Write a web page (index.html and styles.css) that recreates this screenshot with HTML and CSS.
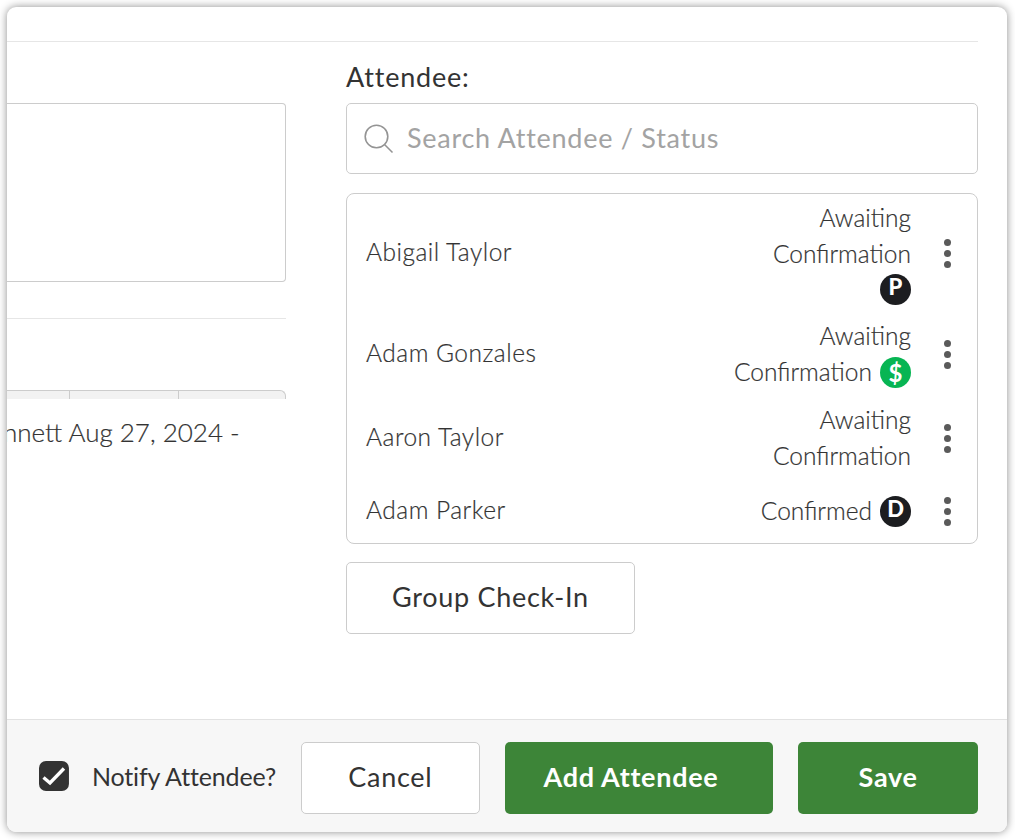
FILE: index.html
```html
<!DOCTYPE html>
<html lang="en">
<head>
    <meta charset="UTF-8">
    <meta name="viewport" content="width=device-width, initial-scale=1.0">
    <title>Attendee</title>
    <link rel="stylesheet" href="styles.css">
</head>
<body>
    <div class="modal">
        <div class="modal-body">
            <div class="left-col">
                <div class="notes-box"></div>
                <div class="divider"></div>
                <div class="table-head">
                    <span class="th th-first"></span>
                    <span class="th th-mid"></span>
                    <span class="th th-last"></span>
                </div>
                <p class="log-entry">nnett Aug 27, 2024 -</p>
            </div>

            <div class="right-col">
                <label class="field-label" for="search">Attendee:</label>
                <div class="search-box">
                    <svg class="search-icon" width="30" height="30" viewBox="0 0 30 30" fill="none" stroke="#949494" stroke-width="1.6">
                        <circle cx="12.5" cy="12.5" r="11.3"/>
                        <path d="M20.5 20.5L28.5 28.5"/>
                    </svg>
                    <input type="text" id="search" class="search-input" placeholder="Search Attendee / Status">
                </div>

                <div class="attendee-list">
                    <div class="attendee-row">
                        <span class="name">Abigail Taylor</span>
                        <span class="status">
                            <span class="line">Awaiting</span>
                            <span class="line">Confirmation</span>
                            <span class="line badge-line"><span class="badge">P</span></span>
                        </span>
                        <span class="dots"><i></i><i></i><i></i></span>
                    </div>
                    <div class="attendee-row">
                        <span class="name">Adam Gonzales</span>
                        <span class="status">
                            <span class="line">Awaiting</span>
                            <span class="line">Confirmation <span class="badge paid">$</span></span>
                        </span>
                        <span class="dots"><i></i><i></i><i></i></span>
                    </div>
                    <div class="attendee-row">
                        <span class="name">Aaron Taylor</span>
                        <span class="status">
                            <span class="line">Awaiting</span>
                            <span class="line">Confirmation</span>
                        </span>
                        <span class="dots"><i></i><i></i><i></i></span>
                    </div>
                    <div class="attendee-row last">
                        <span class="name">Adam Parker</span>
                        <span class="status">
                            <span class="line">Confirmed <span class="badge">D</span></span>
                        </span>
                        <span class="dots"><i></i><i></i><i></i></span>
                    </div>
                </div>

                <button class="btn btn-group">Group Check-In</button>
            </div>
        </div>

        <div class="modal-footer">
            <svg class="checkbox" width="30" height="30" viewBox="0 0 30 30">
                <rect width="30" height="30" rx="7" fill="#333"/>
                <path d="M4.5 16.5L11 22L25 7.5" fill="none" stroke="#fff" stroke-width="3.4"/>
            </svg>
            <span class="notify">Notify Attendee?</span>
            <button class="btn btn-cancel">Cancel</button>
            <button class="btn btn-green btn-add">Add Attendee</button>
            <button class="btn btn-green btn-save">Save</button>
        </div>
    </div>
</body>
</html>
```

FILE: styles.css
```css
* {
    box-sizing: border-box;
}

body {
    margin: 0;
    padding: 7px;
    height: 840px;
    overflow: hidden;
    background: #fff;
    font-family: Lato, "Open Sans", sans-serif;
    color: #333;
}

.modal {
    width: 1000px;
    height: 825px;
    display: flex;
    flex-direction: column;
    background: #fff;
    border-radius: 9px;
    box-shadow: 0 0 8px rgba(0, 0, 0, 0.45);
    overflow: hidden;
}

.modal-body {
    flex: 1;
    display: flex;
    gap: 60px;
    margin: 34px 29px 0 0;
    border-top: 1px solid #e6e6e6;
}

.left-col {
    width: 279px;
    padding-top: 61px;
    overflow: hidden;
}

.notes-box {
    height: 179px;
    border: 1px solid #ccc;
    border-left: none;
    border-radius: 0 4px 4px 0;
}

.divider {
    margin-top: 36px;
    border-top: 1px solid #e6e6e6;
}

.table-head {
    display: flex;
    height: 9px;
    margin-top: 71px;
    background: #f2f2f2;
    border: 1px solid #ccc;
    border-width: 1px 1px 0 0;
    border-radius: 0 6px 0 0;
}

.th {
    border-right: 1px solid #ccc;
}

.th-first {
    width: 63px;
}

.th-mid {
    width: 109px;
}

.th-last {
    border: none;
}

.log-entry {
    margin: 15px 0 0 -4px;
    font-size: 26px;
    line-height: 36px;
    font-weight: 300;
    white-space: nowrap;
    -webkit-text-stroke: 0.2px #333;
}

.right-col {
    flex: 1;
    display: flex;
    flex-direction: column;
    padding-top: 17px;
}

.field-label {
    font-size: 27px;
    line-height: 36px;
    letter-spacing: 0.8px;
}

.search-box {
    display: flex;
    align-items: center;
    gap: 13px;
    height: 71px;
    margin-top: 8px;
    padding: 0 17px;
    border: 1px solid #ccc;
    border-radius: 5px;
}

.search-input {
    flex: 1;
    padding: 0 0 3px;
    border: none;
    outline: none;
    font: 400 27px Lato, "Open Sans", sans-serif;
    letter-spacing: 0.73px;
}

.search-input::placeholder {
    color: #a3a3a3;
}

.attendee-list {
    height: 351px;
    margin-top: 19px;
    border: 1px solid #ccc;
    border-radius: 8px;
}

.attendee-row {
    display: flex;
    align-items: center;
    padding: 6px 26px 6px 19px;
    font-size: 24.5px;
    font-weight: 300;
    -webkit-text-stroke: 0.2px #333;
}

.name {
    flex: 1;
    padding-bottom: 4px;
    letter-spacing: 0.5px;
}

.status {
    display: flex;
    flex-direction: column;
    align-items: flex-end;
}

.line {
    display: flex;
    align-items: center;
    gap: 8px;
    height: 36px;
    line-height: 34px;
}

.badge-line {
    height: 34px;
}

.badge {
    width: 31px;
    height: 31px;
    border-radius: 50%;
    background: #1c1d20;
    color: #fff;
    font-size: 22px;
    line-height: 26px;
    font-weight: 900;
    text-align: center;
    -webkit-text-stroke: 0;
}

.paid {
    background: #07b553;
    font-weight: 700;
    font-size: 24px;
    line-height: 31px;
}

.dots {
    display: flex;
    flex-direction: column;
    gap: 4px;
    margin: 1px 0 0 33px;
}

.dots i {
    width: 7px;
    height: 7px;
    border-radius: 50%;
    background: #5a5a5a;
}

.last {
    padding-top: 13px;
}

.btn {
    height: 72px;
    padding: 0 0 3px;
    border: 1px solid #ccc;
    border-radius: 5px;
    background: #fff;
    color: #333;
    font: 400 27px Lato, "Open Sans", sans-serif;
    letter-spacing: 0.7px;
}

.btn-group {
    width: 289px;
    margin-top: 18px;
}

.modal-footer {
    display: flex;
    align-items: center;
    height: 113px;
    padding: 3px 29px 0 32px;
    background: #f7f7f7;
    border-top: 1px solid #e2e2e2;
}

.checkbox {
    margin-bottom: 3px;
}

.notify {
    width: 184px;
    margin: 0 25px 3px 23px;
    font-size: 25px;
    letter-spacing: -0.15px;
    white-space: nowrap;
}

.btn-cancel {
    width: 179px;
    margin-right: 25px;
}

.btn-green {
    border: none;
    background: #3d8538;
    color: #fff;
    font-weight: 700;
}

.btn-add {
    width: 269px;
    padding-right: 16px;
    margin-right: 25px;
}

.btn-save {
    width: 180px;
}
```
